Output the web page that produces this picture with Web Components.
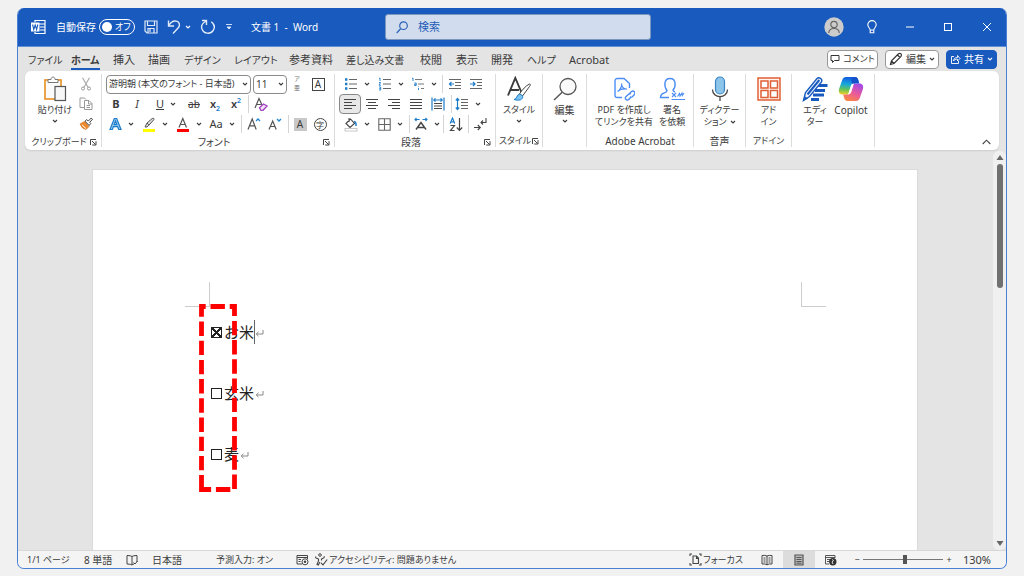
<!DOCTYPE html>
<html lang="ja">
<head>
<meta charset="utf-8">
<meta name="viewport" content="width=device-width, initial-scale=1">
<title>文書 1 - Word</title>
<style>
html, body { height: 100%; margin: 0; }
body {
  background: #f1f1f1;
  color: #3b3b3b;
  font: 11px/14px "Noto Sans", "Noto Sans CJK JP", sans-serif;
  font-feature-settings: "palt";
  overflow: hidden;
}
</style>
</head>
<body>
<word-window></word-window>
<script>
const ICONS = {
  word: [16, 16, '<path d="M5 3V1.500h10v13H5V13M8 5h7M10 8h5M10 11h5" fill="none" stroke="#fff" stroke-width="1.200"/><rect x="1" y="3.500" width="8.500" height="9" fill="#fff"/><path d="M2.600 5.500l1.200 5 1.400-4.500 1.400 4.500 1.200-5" fill="none" stroke="#185abd" stroke-width="1.100"/>'],
  save: [14, 14, '<path d="M1 1h12v12H3l-2-2zM3.500 1v4.500h7V1M4 13V8.500h6V13M6 9v3" fill="none" stroke="#dfe9f8" stroke-width="1.200"/>'],
  undo: [14, 16, '<path d="M1.500 1.500v5.500h5.500M1.800 6.500C4 3 7 1.500 9.500 2.200c3 .8 3.800 4 2 6.300L6 14.500" fill="none" stroke="#dfe9f8" stroke-width="1.400"/>'],
  redo: [16, 16, '<path d="M2 1.500h4.500V6M6.200 2C2.500 4 .8 7 2 10c1.700 5 8.500 5.500 11.200 1.500C15 8.500 14.300 5 11.200 2.800" fill="none" stroke="#dfe9f8" stroke-width="1.400"/>'],
  qat: [8, 8, '<path d="M1 1.500h6M2 4h4L4 6z" fill="#dfe9f8" stroke="#dfe9f8" stroke-width=".9"/>'],
  caret: [6, 6, '<path d="M1 2l2 2 2-2" fill="none" stroke="currentColor" stroke-width="1.100"/>'],
  up: [9, 6, '<path d="M.7 5l3.800-3.800L8.300 5" fill="none" stroke="#444" stroke-width="1.100"/>'],
  search: [12, 13, '<circle cx="7.500" cy="4.700" r="3.800" fill="none" stroke="#2a62b8" stroke-width="1.200"/><path d="M4.800 7.500L.7 12" stroke="#2a62b8" stroke-width="1.200"/>'],
  user: [20, 20, '<circle cx="10" cy="10" r="9.700" fill="#ccc"/><circle cx="10" cy="7.500" r="3.200" fill="none" stroke="#666" stroke-width="1.200"/><path d="M4.700 16c.5-6 10.100-6 10.600 0" fill="none" stroke="#666" stroke-width="1.200"/>'],
  bulb: [10, 14, '<path d="M3.200 10C3 8 .8 7.200.8 4.800a4.200 4.200 0 018.400 0C9.200 7.200 7 8 6.800 10zM3.200 10v2.800h3.600V10" fill="none" stroke="#fff" stroke-width="1.100"/>'],
  min: [10, 10, '<path d="M1 5h8" stroke="#fff"/>'],
  max: [10, 10, '<rect x="1.500" y="1.500" width="7" height="7" fill="none" stroke="#fff"/>'],
  close: [10, 10, '<path d="M1 1l8 8M9 1L1 9" stroke="#fff"/>'],
  comment: [10, 10, '<path d="M1 1.500h8v5H4.500l-2 2v-2H1z" fill="none" stroke="#333"/>'],
  pencil: [14, 14, '<path d="M1.500 12.500l1-3.800L9.500 1.800q1.500-1 2.500 0t0 2.500L5 11.500zM8.500 3l2.500 2.500M2.500 9L5 11.500" fill="none" stroke="#333" stroke-width="1.200"/>'],
  share: [11, 11, '<path d="M4 2.500H1.500v7h7V7M3.500 7c.2-2.500 1.500-3.500 4-3.500V1.500L10 4.500 7.500 7V5.200C5.500 5.200 4.300 5.500 3.500 7z" fill="none" stroke="#fff" stroke-width=".9"/>'],
  paste: [24, 26, '<rect x="2" y="4" width="16" height="19" fill="#fafafa" stroke="#e8952c" stroke-width="1.700"/><path d="M5 6.500V3.500h3c0-3.300 4-3.300 4 0h3v3z" fill="#fff" stroke="#777"/><rect x="12" y="10.500" width="10.500" height="14" fill="#f7f7f7" stroke="#555" stroke-width="1.200"/>'],
  cut: [12, 14, '<path d="M2.500.8l5.700 9.700M9.500.8L3.800 10.500" stroke="#aaa" stroke-width="1.200"/><circle cx="3" cy="11.500" r="1.500" fill="none" stroke="#999"/><circle cx="9" cy="11.500" r="1.500" fill="none" stroke="#999"/>'],
  copy: [14, 14, '<path d="M5 10.500H1V1h4.500L7 2.500M5.500 3.500h4.500L13 6.500v6H5.500zM9.500 3.500V7H13M7.500 8.500h3.500M7.500 10.500h3.500" fill="none" stroke="#999"/>'],
  brush: [14, 14, '<path d="M1 7l4.500-2.500 4.500 5L7 12.500 3.500 11z" fill="#ed8a2b" stroke="#d8701a" stroke-width=".7"/><path d="M3 7.800l4 3.800" stroke="#fff"/><path d="M6 4.200l1.800-1.600 1.500 1.500 2.800-3 1.400 1.200-2.800 3 1 1.200-1.500 2z" fill="#fff" stroke="#444"/>'],
  launch: [8, 8, '<path d="M1.500 7V1.500H7M3 3l3.500 3.500M7 3.200V7H3.200" fill="none" stroke="#444"/>'],
  clear: [14, 14, '<path d="M1 11L5 1.500 8.500 9M2.400 7.500h4.500" fill="none" stroke="#555" stroke-width="1.200"/><path d="M5.500 10.800L9.500 7l3.500 2-4 4.300H7z" fill="#f4e4f8" stroke="#a142c2" stroke-width="1.300"/>'],
  effects: [13, 14, '<path d="M1 12.500L5.300 1.500h2.400L12 12.500H9.700L8.600 9.700H4.400L3.300 12.500zM5.100 7.700h2.800L6.500 4z" fill="#9fd0f2" stroke="#1d7cc9" stroke-width="1.200"/>'],
  marker: [14, 15, '<path d="M3 10l2-4 5.200-4.500q2-.8 1.800 1L6.800 8.300 5 10zM5 6l2 2.200" fill="#ddd" stroke="#555"/><path d="M1 12h12v3H1z" fill="#ffff00"/>'],
  color: [14, 15, '<path d="M3 10.500L6.800 1.500l3.700 9M4.300 7.500h5" fill="none" stroke="#555" stroke-width="1.200"/><path d="M1 12h12v3H1z" fill="#f00"/>'],
  grow: [14, 14, '<path d="M1 12.500L5.200 2l4 10.500M2.500 8.800h5.300" fill="none" stroke="#555" stroke-width="1.200"/><path d="M9 4l2-2 2 2" fill="none" stroke="#2186d0" stroke-width="1.300"/>'],
  shrink: [14, 14, '<path d="M1 12.500L4.700 4l3.500 8.500M2.300 9.500h4.700" fill="none" stroke="#555" stroke-width="1.200"/><path d="M9 2l2 2 2-2" fill="none" stroke="#2186d0" stroke-width="1.300"/>'],
  bullets: [14, 14, '<path d="M5 2.500h8M5 7h8M5 11.500h8" stroke="#666"/><path d="M1 1.300h2.400v2.400H1zM1 5.800h2.400v2.400H1zM1 10.300h2.400v2.400H1z" fill="#1d7cc9"/>'],
  numbers: [14, 14, '<path d="M5 2.500h8M5 7h8M5 11.500h8" stroke="#666"/><path d="M1 1.500L2 1v3M1 5.500h1.500L1 8.200h2M1 10h1.700v3H1M1.300 11.500h1.400" fill="none" stroke="#1d7cc9" stroke-width=".9"/>'],
  multi: [14, 14, '<path d="M4 2.500h7M7 7h6M10 11.500h3" stroke="#777"/><path d="M1 1.500L2 1v3M3.500 6h1.700v2.500H3.500V7.200h1.700M7.500 9.500v.6M7.500 11v2" fill="none" stroke="#1d7cc9" stroke-width=".9"/>'],
  outdent: [14, 14, '<path d="M1 2.500h12M7 5.500h6M7 8.500h6M1 11.500h12" stroke="#666"/><path d="M6 7H1.500M3.500 5l-2 2 2 2" fill="none" stroke="#1d7cc9" stroke-width="1.200"/>'],
  indent: [14, 14, '<path d="M1 2.500h12M8 5.500h5M8 8.500h5M1 11.500h12" stroke="#666"/><path d="M1 7h5M4 5l2 2-2 2" fill="none" stroke="#1d7cc9" stroke-width="1.200"/>'],
  left: [14, 14, '<path d="M1 2.500h12M1 5.500h8M1 8.500h12M1 11.500h8" stroke="#444" stroke-width="1.200"/>'],
  center: [14, 14, '<path d="M1 2.500h12M3 5.500h8M1 8.500h12M3 11.500h8" stroke="#444" stroke-width="1.200"/>'],
  right: [14, 14, '<path d="M1 2.500h12M5 5.500h8M1 8.500h12M5 11.500h8" stroke="#444" stroke-width="1.200"/>'],
  justify: [14, 14, '<path d="M1 2.500h12M1 5.500h12M1 8.500h12M1 11.500h12" stroke="#444" stroke-width="1.200"/>'],
  distribute: [14, 14, '<path d="M3 6.500h8M3 9h8M3 11.500h8" stroke="#444"/><path d="M1 .5v13M13 .5v13M3 3h8M4.500 1.300L2.800 3l1.700 1.700M9.500 1.300L11.200 3 9.500 4.700" fill="none" stroke="#1d7cc9" stroke-width="1.200"/>'],
  spacing: [14, 14, '<path d="M6 2.500h7M6 5.500h7M6 8.500h7M6 11.500h7" stroke="#666"/><path d="M2.500 1.500v11M.8 3.500l1.700-2 1.700 2M.8 10.500l1.700 2 1.700-2" fill="none" stroke="#1d7cc9" stroke-width="1.200"/>'],
  bucket: [14, 15, '<path d="M2 6.500l4.500-4.500 4 4.500-4.500 4zM5 1v4" fill="#fff" stroke="#444" stroke-width="1.100"/><path d="M10 4.500q2.500.5 2 4.500" fill="none" stroke="#1d7cc9" stroke-width="1.500"/><rect x="1" y="11.500" width="12" height="2.500" fill="#fff" stroke="#bbb" stroke-width=".8"/>'],
  borders: [13, 13, '<path d="M.8.800h11.400v11.400H.8zM6.500 1v11M1 6.500h11" fill="none" stroke="#666" stroke-width="1.100"/>'],
  scale: [14, 14, '<path d="M2 12.500L7 5.500l5 7M3.500 10.500h7" fill="none" stroke="#444" stroke-width="1.400"/><path d="M5.500 2.500H1M2.500 1L1 2.500 2.500 4M8.500 2.500H13M11.500 1L13 2.500 11.500 4" fill="none" stroke="#1d7cc9" stroke-width="1.100"/>'],
  sort: [14, 15, '<path d="M1.200 6.500L3.500 1l2.200 5.500M2 4.800h3" fill="none" stroke="#1d7cc9" stroke-width="1.200"/><path d="M1.500 8.500h4l-4 5h4M10.500 1v12M7.800 10.500l2.700 2.800 2.700-2.800" fill="none" stroke="#444" stroke-width="1.200"/>'],
  marks: [14, 14, '<path d="M13 1v4.500H8M10 3.500l-2 2 2 2M1 10.500h6M4.800 8L7.300 10.500 4.800 13" fill="none" stroke="#444" stroke-width="1.100"/>'],
  styles: [26, 26, '<path d="M2 19.500L9.300 2l6 14M4.500 14h8.500" fill="none" stroke="#3b3b3b" stroke-width="1.900"/><path d="M13.500 18C16 14 20 9.500 23.500 8c1.300 0 .8 1.500 0 2.500L16.500 20z" fill="#fff" stroke="#444"/><path d="M8 23.500c3 0 2.500-5 5.500-5.200 3.500.2 4.500 4 1 5.500q-3 1-6.500-.3z" fill="#7ec4f0" stroke="#1d7cc9"/>'],
  find: [24, 24, '<circle cx="15" cy="9.500" r="8" fill="#fafafa" stroke="#555" stroke-width="1.300"/><path d="M9.200 15.200L1 23" stroke="#555" stroke-width="1.400"/>'],
  pdf: [22, 24, '<path d="M9 20.500H4.500Q2 20.500 2 18V4q0-2.500 2.500-2.500H11L16.500 6.500V11" fill="none" stroke="#4b8df5" stroke-width="1.400"/><path d="M4.500 14.500c3-1.500 4.500-5.500 4.200-8M8.500 7c.3 3.500 2 5 5.500 5.200M5 14c2-1.500 5-2.200 8-2" fill="none" stroke="#4b8df5" stroke-width="1.200"/><path d="M15.500 17.500l3-3q1.600-1 2.800.2t.2 2.800l-2.200 2.200q-1.300 1-2.500.2M17.800 17.200q-1.300-.8-2.500.2L12.800 19.800q-1 1.500.1 2.600t2.700.2l2.700-2.800" fill="none" stroke="#4b8df5" stroke-width="1.400"/>'],
  sign: [26, 24, '<path d="M10 20.500H1.500c0-6 6.500-3.500 6.500-7C5 10 4.500 1.500 11 1.500S17 10 14 13q.3 1.500 2 2" fill="none" stroke="#4b8df5" stroke-width="1.400"/><path d="M13 16l4 4M17 16l-4 4M18.500 19.500l2-3 .5 2.500 2-3 .3 2.500L25 16M12.500 22.500H26" fill="none" stroke="#4b8df5" stroke-width="1.100"/>'],
  mic: [18, 26, '<rect x="4.500" y="1" width="9" height="17" rx="4.500" fill="#8dc4ea" stroke="#3a86c4" stroke-width="1.200"/><path d="M1.500 13.500c0 9.500 15 9.500 15 0M9 20.500V25" fill="none" stroke="#444" stroke-width="1.300"/>'],
  addins: [24, 24, '<path d="M1 1h22v22H1z" fill="#fff5f1" stroke="#df5f36" stroke-width="1.500"/><path d="M4 4h7v7H4zM13.500 4h7v7h-7zM4 13.500h7v7H4zM13.500 13.500h7v7h-7z" fill="#fff" stroke="#df5f36" stroke-width="1.500"/>'],
  editor: [26, 26, '<path d="M16 9.500h9.500M13 14.500h10M11 19h11M9 23.500h8" stroke="#185abd" stroke-width="2.800"/><path d="M1.500 24.500l2-8L15 2.500q1.500-1.500 3.500-.2t1 3.700L7.500 20.500z" fill="#eef4ff" stroke="#185abd" stroke-width="1.400"/><path d="M5.500 18.500L17.300 4" stroke="#185abd" stroke-width="2"/><path d="M1 25l1.500-5 3.500 2.500z" fill="#185abd"/>'],
  copilot: [26, 26, '<defs><linearGradient id="a" x1=".3" y1="0" x2=".2" y2="1"><stop stop-color="#125be0"/><stop offset=".4" stop-color="#16a8dd"/><stop offset=".7" stop-color="#62c35b"/><stop offset="1" stop-color="#f5cf26"/></linearGradient><linearGradient id="b" x1=".7" y1="0" x2=".2" y2="1"><stop stop-color="#a44be4"/><stop offset=".5" stop-color="#ea5b9a"/><stop offset="1" stop-color="#fb893d"/></linearGradient></defs><path d="M8 1h9c2 0 2.800 1.200 3.400 3.500L21 7h-4C14.500 7 13.500 8 12.800 10.500L10.500 18.500H4.500C1.500 18.500 0 16 1.200 12.500l3-8.500Q5.300 1 8 1z" fill="url(#a)"/><path d="M18 25H9.500c-2 0-2.900-1.200-3.500-3.500L5.200 18.500H9c2.500 0 3.800-1 4.500-3.500L15.800 7.500h5.700c3 0 4.500 2.500 3.300 6l-3 8.500Q20.700 25 18 25z" fill="url(#b)"/><path d="M15 1h2q2.800 0 3.400 3.500L21.200 7.500H17q-1.500 0-2.500.8L13 4z" fill="#1652c9"/><path d="M12.800 10.200q.8-2.300 3-2.700L13 16.500q-.7 2-3 2z" fill="#fff"/>'],
  book: [12, 12, '<path d="M6 2.500Q5 1.500 1 1.500V10q4 0 5 1 1-1 2-1M6 2.500Q7 1.500 11 1.500V8M6 2.500V11M7.500 8.500L9 10l2.500-3" fill="none" stroke="#444"/>'],
  macro: [13, 12, '<path d="M6 10H1V1.500h10.500V5M1 3.500h10.500M2.500 5.500H5M2.500 7.500H4.500" fill="none" stroke="#444"/><circle cx="9" cy="7.800" r="3" fill="#fff" stroke="#444"/><circle cx="9" cy="7.800" r="1.300" fill="#444"/>'],
  access: [13, 13, '<circle cx="5" cy="2" r="1.300" fill="none" stroke="#444"/><path d="M.8 3.500q-.5 1.500 1 1.700L3.500 6v2L2 11.500l1.300.6L5 9M9 3.200q.7 1.500-1 2L6.500 6v1.500M6 9.800l2 2L12.200 6.500" fill="none" stroke="#444" stroke-width="1.100"/>'],
  focus: [13, 13, '<path d="M3 1H1v2M10 1h2v2M3 12H1v-2M10 12h2v-2M4 3h3.500L9.500 5v5.500H4zM7.500 3v2.500h2" fill="none" stroke="#444" stroke-width="1.100"/>'],
  read: [12, 12, '<path d="M6 2Q4 1 1 1.500V10q3-.5 5 .8Q8 9.500 11 10V1.500Q8 1 6 2zV11M2.500 4h2M2.500 6h2M2.500 8h2M7.500 4h2M7.500 6h2M7.500 8h2" fill="none" stroke="#444"/>'],
  print: [10, 12, '<path d="M1 1h8v10H1z" fill="#bbb" stroke="#555" stroke-width="1.200"/><path d="M2.500 3.500h5M2.500 5.500h5M2.500 7.500h5M2.500 9.200h5" stroke="#555"/>'],
  web: [13, 12, '<path d="M5 10H1.500V1.500H11V4M1.500 3.500H11M3 5.500h3M3 7.500h2" fill="none" stroke="#555"/><circle cx="8.800" cy="7.800" r="3.700" fill="#333"/><path d="M8 5.500l1.500 1L8 8l1 2" fill="none" stroke="#eee" stroke-width=".9"/>'],
  arrowUp: [8, 7, '<path d="M4 1l3.500 5h-7z" fill="#666"/>'],
  arrowDown: [8, 7, '<path d="M4 6L.5 1h7z" fill="#666"/>'],
  para: [9, 8, '<path d="M8 1v4H1.500M3.500 2.800L1.200 5l2.300 2.200" fill="none" stroke="#888"/>'],
  dashes: [38, 190, '<path d="M2.500 185.500V2.500H35.500V185.500Z" fill="none" stroke="#f00" stroke-width="4.800" stroke-dasharray="14.400 4.800"/>']
};

const RESET = `
  *, *::before { box-sizing: border-box; }
  button, input, select { font: inherit; font-feature-settings: inherit; color: inherit; margin: 0; padding: 0; border: 0; background: none; min-width: 0; }
`;

function define(name, css, html, setup) {
  const template = document.createElement('template');
  template.innerHTML = `<style>${RESET}${css}</style>${html}`;
  customElements.define(name, class extends HTMLElement {
    constructor() {
      super();
      this.attachShadow({ mode: 'open' }).append(template.content.cloneNode(true));
    }
    connectedCallback() { if (setup) setup.call(this, this.shadowRoot); }
  });
}

define('wd-icon', ':host { display: block; flex: none; } svg { display: block; }', '', function (root) {
  const [w, h, body] = ICONS[this.getAttribute('name')];
  root.querySelector('svg')?.remove();
  root.append(document.createRange().createContextualFragment(
    `<svg width="${w}" height="${h}" viewBox="0 0 ${w} ${h}" aria-hidden="true">${body}</svg>`));
});

/* A small ribbon command; "w" is its column width, "menu" adds the arrow. */
define('tool-button', `
  :host { display: block; flex: none; height: 20px; }
  button { width: 100%; height: 100%; display: flex; align-items: center; justify-content: center; gap: 6px; font-size: 11px; line-height: 16px; }
  :host([pressed]) button { border: 1px solid #888; border-radius: 4px; background: #e8e8e8; }
  :host(:not([menu])) wd-icon { display: none; }
`, '<button type="button"><slot></slot><wd-icon name="caret"></wd-icon></button>', function (root) {
  this.style.width = this.getAttribute('w') + 'px';
  root.querySelector('button').setAttribute('aria-label', this.getAttribute('label'));
});

/* A tall ribbon command: an icon over its caption; "small" is for long kana captions. */
define('large-button', `
  :host { display: block; flex: none; }
  button { display: flex; flex-direction: column; align-items: center; width: 100%; font-size: 10px; line-height: 12px; white-space: nowrap; }
  :host([small]) button { font-size: 9px; }
  .art { height: 29px; display: flex; align-items: center; }
  .caption { padding-top: 1px; }
  .menu { margin-top: 2px; }
  :host(:not([menu])) .menu { display: none; }
`, '<button type="button"><span class="art"><slot name="icon"></slot></span><span class="caption"><slot></slot></span><wd-icon class="menu" name="caret"></wd-icon></button>');

define('ribbon-group', `
  :host { display: flex; flex-direction: column; flex: none; border-right: 1px solid #dcdcdc; margin: 3px 0; }
  .body { height: 60px; padding: 0 4px; }
  footer { flex: 1; display: flex; align-items: center; justify-content: center; font-size: 10px; line-height: 12px; padding-top: 2px; white-space: nowrap; }
  :host([small]) footer { font-size: 9px; }
  wd-icon { display: none; }
  :host([launcher]) footer { padding: 2px 4px 0; }
  :host([launcher]) wd-icon { display: block; }
  :host([launcher]) span { flex: 1; text-align: center; }
`, '<div class="body"><slot></slot></div><footer><span></span><wd-icon name="launch"></wd-icon></footer>', function (root) {
  this.style.width = this.getAttribute('w') + 'px';
  root.querySelector('span').textContent = this.getAttribute('name') || '';
});

define('combo-box', `
  :host { display: grid; height: 19px; border: 1px solid #8a8a8a; border-radius: 4px; align-items: center; }
  select, wd-icon { grid-area: 1 / 1; }
  select { appearance: none; width: 100%; height: 17px; padding: 0 8px 0 2px; font-size: 9px; line-height: 14px; }
  :host([large]) select { font-size: 10px; }
  wd-icon { justify-self: end; margin-right: 2px; pointer-events: none; }
`, '<select><option></option></select><wd-icon name="caret"></wd-icon>', function (root) {
  root.querySelector('option').textContent = this.getAttribute('value');
  root.querySelector('select').setAttribute('aria-label', this.getAttribute('label'));
});

define('title-bar', `
  :host { display: flex; align-items: center; height: 39px; flex: none; background: #185abd; color: #fff; padding: 0 12px; border-bottom: 1px solid #5f8fd6; }
  .quick { width: 355px; flex: none; display: flex; align-items: center; white-space: nowrap; }
  .quick button { display: flex; align-items: center; gap: 4px; margin-left: 9px; }
  label { margin-left: 10px; font-size: 10px; width: 43px; }
  .switch { position: relative; width: 36px; height: 16px; }
  .switch input { appearance: none; width: 100%; height: 100%; display: block; border: 1px solid #fff; border-radius: 8px; }
  .switch::before { content: ""; position: absolute; left: 3px; top: 3px; width: 10px; height: 10px; border-radius: 5px; background: #fff; }
  .switch span { position: absolute; left: 16px; top: 1px; font-size: 9px; line-height: 14px; }
  h1 { margin: 0 0 0 18px; font-size: 10px; line-height: 14px; font-weight: 400; white-space: pre; }
  .search { flex: 0 1 266px; height: 26px; display: flex; align-items: center; gap: 10px; padding: 0 10px; background: #d1dcee; border: 1px solid #7d96bd; border-radius: 3px; color: #245db8; }
  input::placeholder { color: #245db8; opacity: 1; }
  .search input { flex: 1; outline: 0; }
  .window { margin-left: auto; display: flex; }
  .window button { width: 38px; display: grid; place-items: center; }
  .window button:last-child { width: 39px; margin-right: -12px; }
`, `
  <div class="quick">
    <wd-icon name="word"></wd-icon>
    <label for="auto">自動保存</label>
    <div class="switch"><input id="auto" type="checkbox" role="switch"><span>オフ</span></div>
    <button type="button" aria-label="上書き保存"><wd-icon name="save"></wd-icon></button>
    <button type="button" aria-label="元に戻す"><wd-icon name="undo"></wd-icon><wd-icon name="caret"></wd-icon></button>
    <button type="button" aria-label="繰り返し"><wd-icon name="redo"></wd-icon></button>
    <button type="button" aria-label="カスタマイズ"><wd-icon name="qat"></wd-icon></button>
    <h1>文書 1  -  Word</h1>
  </div>
  <div class="search"><wd-icon name="search"></wd-icon><input type="search" placeholder="検索" aria-label="検索"></div>
  <div class="window">
    <button type="button" aria-label="アカウント"><wd-icon name="user"></wd-icon></button>
    <button type="button" aria-label="ヒント"><wd-icon name="bulb"></wd-icon></button>
    <button type="button" aria-label="最小化"><wd-icon name="min"></wd-icon></button>
    <button type="button" aria-label="最大化"><wd-icon name="max"></wd-icon></button>
    <button type="button" aria-label="閉じる"><wd-icon name="close"></wd-icon></button>
  </div>`);

define('tab-bar', `
  :host { display: flex; align-items: center; height: 24px; flex: none; padding: 0 9px 0 10px; }
  nav { display: grid; grid-template-columns: 43px 42px 35px 36px 50px 55px 57px 74px 36px 35px 36px 42px 50px; font-size: 11px; line-height: 16px; }
  nav.tabs a { color: inherit; text-decoration: none; white-space: nowrap; justify-self: start; border-bottom: 2px solid transparent; padding-top: 3px; }
  nav.tabs a.kana { font-size: 10px; }
  nav.tabs a.on { font-weight: 700; border-color: #185abd; }
  .actions { margin-left: auto; display: flex; gap: 7px; }
  .actions button { height: 19px; display: flex; align-items: center; justify-content: center; gap: 3px; border: 1px solid #999; border-radius: 4px; background: #fff; font-size: 10px; line-height: 14px; white-space: nowrap; }
  .actions .comment { width: 51px; font-size: 9px; } .actions .edit { width: 54px; }
  .actions .share { width: 51px; background: #185abd; border-color: #185abd; color: #fff; }
`, `
  <nav class="tabs">
    <a class="kana" href="#file">ファイル</a><a class="kana on" href="#home">ホーム</a><a href="#insert">挿入</a><a href="#draw">描画</a><a class="kana" href="#design">デザイン</a><a class="kana" href="#layout">レイアウト</a><a href="#ref">参考資料</a><a class="kana" href="#mail">差し込み文書</a><a href="#review">校閲</a><a href="#view">表示</a><a href="#dev">開発</a><a class="kana" href="#help">ヘルプ</a><a href="#acrobat">Acrobat</a>
  </nav>
  <div class="actions">
    <button class="comment" type="button"><wd-icon name="comment"></wd-icon><span>コメント</span></button>
    <button class="edit" type="button"><wd-icon name="pencil"></wd-icon><span>編集</span><wd-icon name="caret"></wd-icon></button>
    <button class="share" type="button"><wd-icon name="share"></wd-icon><span>共有</span><wd-icon name="caret"></wd-icon></button>
  </div>`);

define('ribbon-bar', `
  :host { display: flex; height: 79px; flex: none; margin: 0 7px; background: #fff; border-radius: 6px; box-shadow: 0 1px 2px #ccc; }
  .row { display: flex; align-items: center; height: 20px; }
  .row i.sep { width: 1px; height: 18px; background: #d4d4d4; margin: 0 2px; flex: none; }
  .side { display: flex; justify-content: center; }
  .stack { display: grid; }
  .script { font-weight: 600; } sub, sup { font-size: 7px; line-height: 0; color: #1d7cc9; }
  .ruby { display: grid; font-size: 6px; line-height: 9px; text-align: center; color: #777; }
  .boxed { border: 1px solid #444; width: 13px; height: 13px; font-size: 10px; line-height: 11px; text-align: center; }
  .shaded { background: #c8c8c8; width: 13px; height: 13px; font-size: 10px; line-height: 13px; text-align: center; }
  .ring { border: 1px solid #444; border-radius: 7px; width: 13px; height: 13px; font-size: 8px; line-height: 11px; text-align: center; }
  .strike { text-decoration: line-through; font-size: 10px; }
  .collapse { margin: auto 8px 4px auto; height: 8px; display: grid; place-items: center; }
  .inline { display: flex; align-items: center; gap: 3px; justify-content: center; }
`, `
  <ribbon-group w="77" name="クリップボード" launcher small>
    <div class="side">
      <large-button menu small style="width:46px"><wd-icon slot="icon" name="paste"></wd-icon>貼り付け</large-button>
      <div class="stack">
        <tool-button w="16" label="切り取り"><wd-icon name="cut"></wd-icon></tool-button>
        <tool-button w="16" label="コピー"><wd-icon name="copy"></wd-icon></tool-button>
        <tool-button w="16" label="書式のコピー"><wd-icon name="brush"></wd-icon></tool-button>
      </div>
    </div>
  </ribbon-group>
  <ribbon-group w="233" name="フォント" launcher>
    <div class="row">
      <combo-box style="width:145px" label="フォント" value="游明朝 (本文のフォント - 日本語)"></combo-box>
      <combo-box large style="width:34px;margin-left:2px" label="サイズ" value="11"></combo-box>
      <tool-button w="20" label="ルビ"><span class="ruby"><span>ア</span><span>亜</span></span></tool-button>
      <tool-button w="22" label="囲み線"><span class="boxed">A</span></tool-button>
    </div>
    <div class="row">
      <tool-button w="20" label="太字"><b>B</b></tool-button>
      <tool-button w="22" label="斜体"><em>I</em></tool-button>
      <tool-button w="36" label="下線" menu><u>U</u></tool-button>
      <tool-button w="20" label="取り消し線"><span class="strike">ab</span></tool-button>
      <tool-button w="22" label="下付き"><span class="script">x<sub>2</sub></span></tool-button>
      <tool-button w="20" label="上付き"><span class="script">x<sup>2</sup></span></tool-button>
      <i class="sep"></i>
      <tool-button w="20" label="書式のクリア"><wd-icon name="clear"></wd-icon></tool-button>
    </div>
    <div class="row">
      <tool-button w="31" label="文字の効果" menu><wd-icon name="effects"></wd-icon></tool-button>
      <tool-button w="36" label="蛍光ペン" menu><wd-icon name="marker"></wd-icon></tool-button>
      <tool-button w="32" label="フォントの色" menu><wd-icon name="color"></wd-icon></tool-button>
      <tool-button w="34" label="文字種の変換" menu><span>Aa</span></tool-button>
      <i class="sep"></i>
      <tool-button w="20" label="拡大"><wd-icon name="grow"></wd-icon></tool-button>
      <tool-button w="22" label="縮小"><wd-icon name="shrink"></wd-icon></tool-button>
      <i class="sep"></i>
      <tool-button w="18" label="網かけ"><span class="shaded">A</span></tool-button>
      <tool-button w="22" label="囲い文字"><span class="ring">字</span></tool-button>
    </div>
  </ribbon-group>
  <ribbon-group w="161" name="段落" launcher>
    <div class="row">
      <tool-button w="35" label="箇条書き" menu><wd-icon name="bullets"></wd-icon></tool-button>
      <tool-button w="33" label="段落番号" menu><wd-icon name="numbers"></wd-icon></tool-button>
      <tool-button w="33" label="アウトライン" menu><wd-icon name="multi"></wd-icon></tool-button>
      <i class="sep"></i>
      <tool-button w="20" label="インデントを減らす"><wd-icon name="outdent"></wd-icon></tool-button>
      <tool-button w="22" label="インデントを増やす"><wd-icon name="indent"></wd-icon></tool-button>
    </div>
    <div class="row">
      <tool-button w="22" label="左揃え" pressed><wd-icon name="left"></wd-icon></tool-button>
      <tool-button w="22" label="中央揃え"><wd-icon name="center"></wd-icon></tool-button>
      <tool-button w="22" label="右揃え"><wd-icon name="right"></wd-icon></tool-button>
      <tool-button w="22" label="両端揃え"><wd-icon name="justify"></wd-icon></tool-button>
      <tool-button w="22" label="均等割り付け"><wd-icon name="distribute"></wd-icon></tool-button>
      <i class="sep"></i>
      <tool-button w="28" label="行間" menu><wd-icon name="spacing"></wd-icon></tool-button>
    </div>
    <div class="row">
      <tool-button w="35" label="塗りつぶし" menu><wd-icon name="bucket"></wd-icon></tool-button>
      <tool-button w="33" label="罫線" menu><wd-icon name="borders"></wd-icon></tool-button>
      <i class="sep"></i>
      <tool-button w="29" label="拡張書式" menu><wd-icon name="scale"></wd-icon></tool-button>
      <i class="sep"></i>
      <tool-button w="20" label="並べ替え"><wd-icon name="sort"></wd-icon></tool-button>
      <i class="sep"></i>
      <tool-button w="18" label="編集記号"><wd-icon name="marks"></wd-icon></tool-button>
    </div>
  </ribbon-group>
  <ribbon-group w="47" name="スタイル" launcher small>
    <large-button menu small><wd-icon slot="icon" name="styles"></wd-icon>スタイル</large-button>
  </ribbon-group>
  <ribbon-group w="44">
    <large-button menu><wd-icon slot="icon" name="find"></wd-icon>編集</large-button>
  </ribbon-group>
  <ribbon-group w="107" name="Adobe Acrobat">
    <div class="side">
      <large-button small style="width:64px"><wd-icon slot="icon" name="pdf"></wd-icon>PDF を作成し<br>てリンクを共有</large-button>
      <large-button small style="width:32px"><wd-icon slot="icon" name="sign"></wd-icon>署名<br>を依頼</large-button>
    </div>
  </ribbon-group>
  <ribbon-group w="52" name="音声">
    <large-button small><wd-icon slot="icon" name="mic"></wd-icon>ディクテー<br><span class="inline">ション<wd-icon name="caret"></wd-icon></span></large-button>
  </ribbon-group>
  <ribbon-group w="46" name="アドイン" small>
    <large-button small><wd-icon slot="icon" name="addins"></wd-icon>アド<br>イン</large-button>
  </ribbon-group>
  <ribbon-group w="83">
    <div class="side">
      <large-button small style="width:36px"><wd-icon slot="icon" name="editor"></wd-icon>エディ<br>ター</large-button>
      <large-button style="width:36px"><wd-icon slot="icon" name="copilot"></wd-icon>Copilot</large-button>
    </div>
  </ribbon-group>
  <button class="collapse" type="button" aria-label="リボンを折りたたむ"><wd-icon name="up"></wd-icon></button>`);

/* One line of the document: a check box content control and its text. */
define('check-line', `
  :host { display: flex; align-items: center; height: 61px; color: #222; }
  input { appearance: none; width: 11px; height: 11px; border: 1px solid #222; margin-right: 2px; flex: none; }
  input:checked { background: linear-gradient(45deg, transparent 44%, #222 44% 56%, transparent 56%), linear-gradient(-45deg, transparent 44%, #222 44% 56%, transparent 56%); }
  label { font-size: 15px; line-height: 24px; font-feature-settings: normal; border-right: 1px solid transparent; margin-bottom: 2px; }
  :host([caret]) label { border-color: #666; }
`, '<input id="box" type="checkbox"><label for="box"><slot></slot></label><wd-icon name="para"></wd-icon>', function (root) {
  root.querySelector('input').checked = this.hasAttribute('checked');
});

define('document-area', `
  :host { display: flex; flex: 1; min-height: 0; }
  article { flex: 1; margin: 18px 75px 0 74px; background: #fff; border: 1px solid #dadada; border-bottom: 0; padding-top: 112px; position: relative; overflow: hidden; }
  .corners { display: flex; justify-content: space-between; padding: 0 91px 0 92px; }
  .corners span { width: 25px; height: 25px; border: solid #ccc; border-width: 0 1px 1px 0; }
  .corners span + span { border-width: 0 0 1px 1px; }
  .text { padding-left: 118px; margin-top: -5px; }
  .mark { position: absolute; left: 106px; top: 134px; pointer-events: none; }
  aside { width: 13px; display: flex; flex-direction: column; align-items: center; padding: 3px 0; background: #f0f0f0; border-radius: 6px; }
  .thumb { width: 6px; height: 124px; margin-top: 3px; border-radius: 3px; background: #707070; }
  aside wd-icon:last-child { margin-top: auto; }
`, `
  <article>
    <div class="corners"><span></span><span></span></div>
    <div class="text">
      <check-line checked caret>お米</check-line>
      <check-line>玄米</check-line>
      <check-line>麦</check-line>
    </div>
    <wd-icon class="mark" name="dashes"></wd-icon>
  </article>
  <aside><wd-icon name="arrowUp"></wd-icon><div class="thumb"></div><wd-icon name="arrowDown"></wd-icon></aside>`);

define('status-bar', `
  :host { display: flex; align-items: center; height: 18px; flex: none; background: #f4f4f4; border-top: 1px solid #d8d8d8; padding: 0 15px 0 9px; font-size: 9px; line-height: 14px; white-space: nowrap; }
  .left { display: grid; grid-template-columns: 57px 42px 26px 64px 74px 25px auto; align-items: center; }
  .han { font-size: 10px; }
  .right { margin-left: auto; display: flex; align-items: center; }
  .pair { display: flex; align-items: center; gap: 1px; }
  .view { width: 32px; height: 17px; display: grid; place-items: center; }
  .view.on { background: #dcdcdc; }
  .focus { margin-right: 8px; }
  .zoom { display: flex; align-items: center; margin-left: 4px; }
  .step { width: 12px; text-align: center; }
  input { appearance: none; width: 80px; height: 12px; background: linear-gradient(#777, #777) center / 100% 1px no-repeat; }
  input::-webkit-slider-thumb { appearance: none; width: 4px; height: 9px; background: #555; }
  output { font-size: 11px; margin-left: 8px; }
`, `
  <div class="left">
    <span>1/1 ページ</span><span class="han">8 単語</span><wd-icon name="book"></wd-icon><span class="han">日本語</span><span>予測入力: オン</span><wd-icon name="macro" style="justify-self:center"></wd-icon>
    <span class="pair"><wd-icon name="access"></wd-icon>アクセシビリティ: 問題ありません</span>
  </div>
  <div class="right">
    <button type="button" class="pair focus"><wd-icon name="focus"></wd-icon>フォーカス</button>
    <button type="button" class="view" aria-label="閲覧モード"><wd-icon name="read"></wd-icon></button>
    <button type="button" class="view on" aria-label="印刷レイアウト"><wd-icon name="print"></wd-icon></button>
    <button type="button" class="view" aria-label="Web レイアウト"><wd-icon name="web"></wd-icon></button>
    <div class="zoom">
      <button type="button" class="step" aria-label="縮小">−</button>
      <input type="range" min="0" max="100" value="53" aria-label="ズーム">
      <button type="button" class="step" aria-label="拡大">+</button>
    </div>
    <output>130%</output>
  </div>`);

define('word-window', `
  *, :host { box-sizing: border-box; }
  :host { display: block; height: 100%; padding: 8px 17px 7px; }
  .frame { display: flex; flex-direction: column; height: 100%; background: #e4e4e4; border: 1px solid #4a80d4; border-top: 0; border-radius: 7px; overflow: hidden; }
  .gap { flex: none; height: 1px; }
`, '<div class="frame"><title-bar></title-bar><tab-bar></tab-bar><ribbon-bar></ribbon-bar><div class="gap"></div><document-area></document-area><status-bar></status-bar></div>');
</script>
</body>
</html>
